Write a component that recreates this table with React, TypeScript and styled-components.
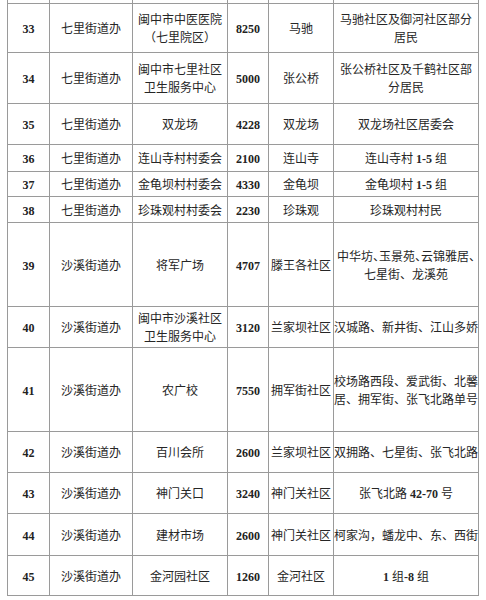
import React from "react";
import styled, { createGlobalStyle } from "styled-components";

const Global = createGlobalStyle`
  html, body { margin: 0; padding: 0; background: #ffffff; }
  * { box-sizing: border-box; }
`;

const COLS = "42px 83px 95px 41px 65px 145px";
const LINE = "#9a9a9a";

const Page = styled.div`
  width: 486px;
  height: 600px;
  padding-left: 7px;
  background: #fff;
  overflow: hidden;
`;

const Sheet = styled.div`
  width: 472px;
  border-left: 1px solid ${LINE};
  display: flex;
  flex-direction: column;
`;

const Row = styled.div<{ $h: number }>`
  display: grid;
  grid-template-columns: ${COLS};
  height: ${(p) => p.$h}px;
  border-bottom: 1px solid ${LINE};
`;

const Cell = styled.div<{ $align?: "left" | "center" }>`
  border-right: 1px solid ${LINE};
  display: flex;
  flex-direction: column;
  align-items: ${(p) => (p.$align === "left" ? "flex-start" : "center")};
  justify-content: center;
  font-family: "Liberation Serif", "Noto Sans CJK SC", serif;
  font-size: 12px;
  line-height: 18px;
  color: #262626;
  white-space: nowrap;
  overflow: hidden;
  padding-top: 2px;
`;

const Num = styled.span`
  font-family: "Liberation Serif", serif;
  font-weight: bold;
  font-size: 12px;
  color: #222;
`;

const Line = styled.span<{ $halt?: boolean }>`
  display: block;
  font-feature-settings: ${(p) => (p.$halt ? '"halt"' : "normal")};
`;

const Bold = styled.span`
  font-family: "Liberation Serif", serif;
  font-weight: bold;
`;

type RowData = {
  no: string;
  office: string;
  site: string[];
  count: string;
  community: string;
  scope: React.ReactNode;
  scopeAlign?: "left" | "center";
  h: number;
};

const rows: RowData[] = [
  { no: "33", office: "七里街道办", site: ["闽中市中医医院", "（七里院区）"], count: "8250", community: "马驰", scope: (<><Line>马驰社区及御河社区部分</Line><Line>居民</Line></>), h: 49 },
  { no: "34", office: "七里街道办", site: ["闽中市七里社区", "卫生服务中心"], count: "5000", community: "张公桥", scope: (<><Line>张公桥社区及千鹤社区部</Line><Line>分居民</Line></>), h: 51 },
  { no: "35", office: "七里街道办", site: ["双龙场"], count: "4228", community: "双龙场", scope: <Line>双龙场社区居委会</Line>, h: 41 },
  { no: "36", office: "七里街道办", site: ["连山寺村村委会"], count: "2100", community: "连山寺", scope: <Line>连山寺村 <Bold>1-5</Bold> 组</Line>, h: 27 },
  { no: "37", office: "七里街道办", site: ["金龟坝村村委会"], count: "4330", community: "金龟坝", scope: <Line>金龟坝村 <Bold>1-5</Bold> 组</Line>, h: 25 },
  { no: "38", office: "七里街道办", site: ["珍珠观村村委会"], count: "2230", community: "珍珠观", scope: <Line>珍珠观村村民</Line>, h: 26 },
  { no: "39", office: "沙溪街道办", site: ["将军广场"], count: "4707", community: "滕王各社区", scope: (<><Line $halt>中华坊、玉景苑、云锦雅居、</Line><Line>七星街、龙溪苑</Line></>), h: 84 },
  { no: "40", office: "沙溪街道办", site: ["闽中市沙溪社区", "卫生服务中心"], count: "3120", community: "兰家坝社区", scope: <Line>汉城路、新井街、江山多娇</Line>, h: 41 },
  { no: "41", office: "沙溪街道办", site: ["农广校"], count: "7550", community: "拥军街社区", scope: (<><Line>校场路西段、爱武街、北馨</Line><Line>居、拥军街、张飞北路单号</Line></>), scopeAlign: "left", h: 84 },
  { no: "42", office: "沙溪街道办", site: ["百川会所"], count: "2600", community: "兰家坝社区", scope: <Line>双拥路、七星街、张飞北路</Line>, h: 41 },
  { no: "43", office: "沙溪街道办", site: ["神门关口"], count: "3240", community: "神门关社区", scope: <Line>张飞北路 <Bold>42-70</Bold> 号</Line>, h: 41 },
  { no: "44", office: "沙溪街道办", site: ["建材市场"], count: "2600", community: "神门关社区", scope: <Line>柯家沟，蟠龙中、东、西街</Line>, h: 42 },
  { no: "45", office: "沙溪街道办", site: ["金河园社区"], count: "1260", community: "金河社区", scope: <Line><Bold>1</Bold> 组<Bold>-8</Bold> 组</Line>, h: 40 },
];

export default function App() {
  return (
    <>
      <Global />
      <Page>
        <Sheet>
          <Row $h={4}>
            <Cell /><Cell /><Cell /><Cell /><Cell /><Cell />
          </Row>
          {rows.map((r) => (
            <Row key={r.no} $h={r.h}>
              <Cell><Num>{r.no}</Num></Cell>
              <Cell><Line>{r.office}</Line></Cell>
              <Cell>
                {r.site.map((s) => (
                  <Line key={s}>{s}</Line>
                ))}
              </Cell>
              <Cell><Num>{r.count}</Num></Cell>
              <Cell><Line>{r.community}</Line></Cell>
              <Cell $align={r.scopeAlign}>{r.scope}</Cell>
            </Row>
          ))}
        </Sheet>
      </Page>
    </>
  );
}
